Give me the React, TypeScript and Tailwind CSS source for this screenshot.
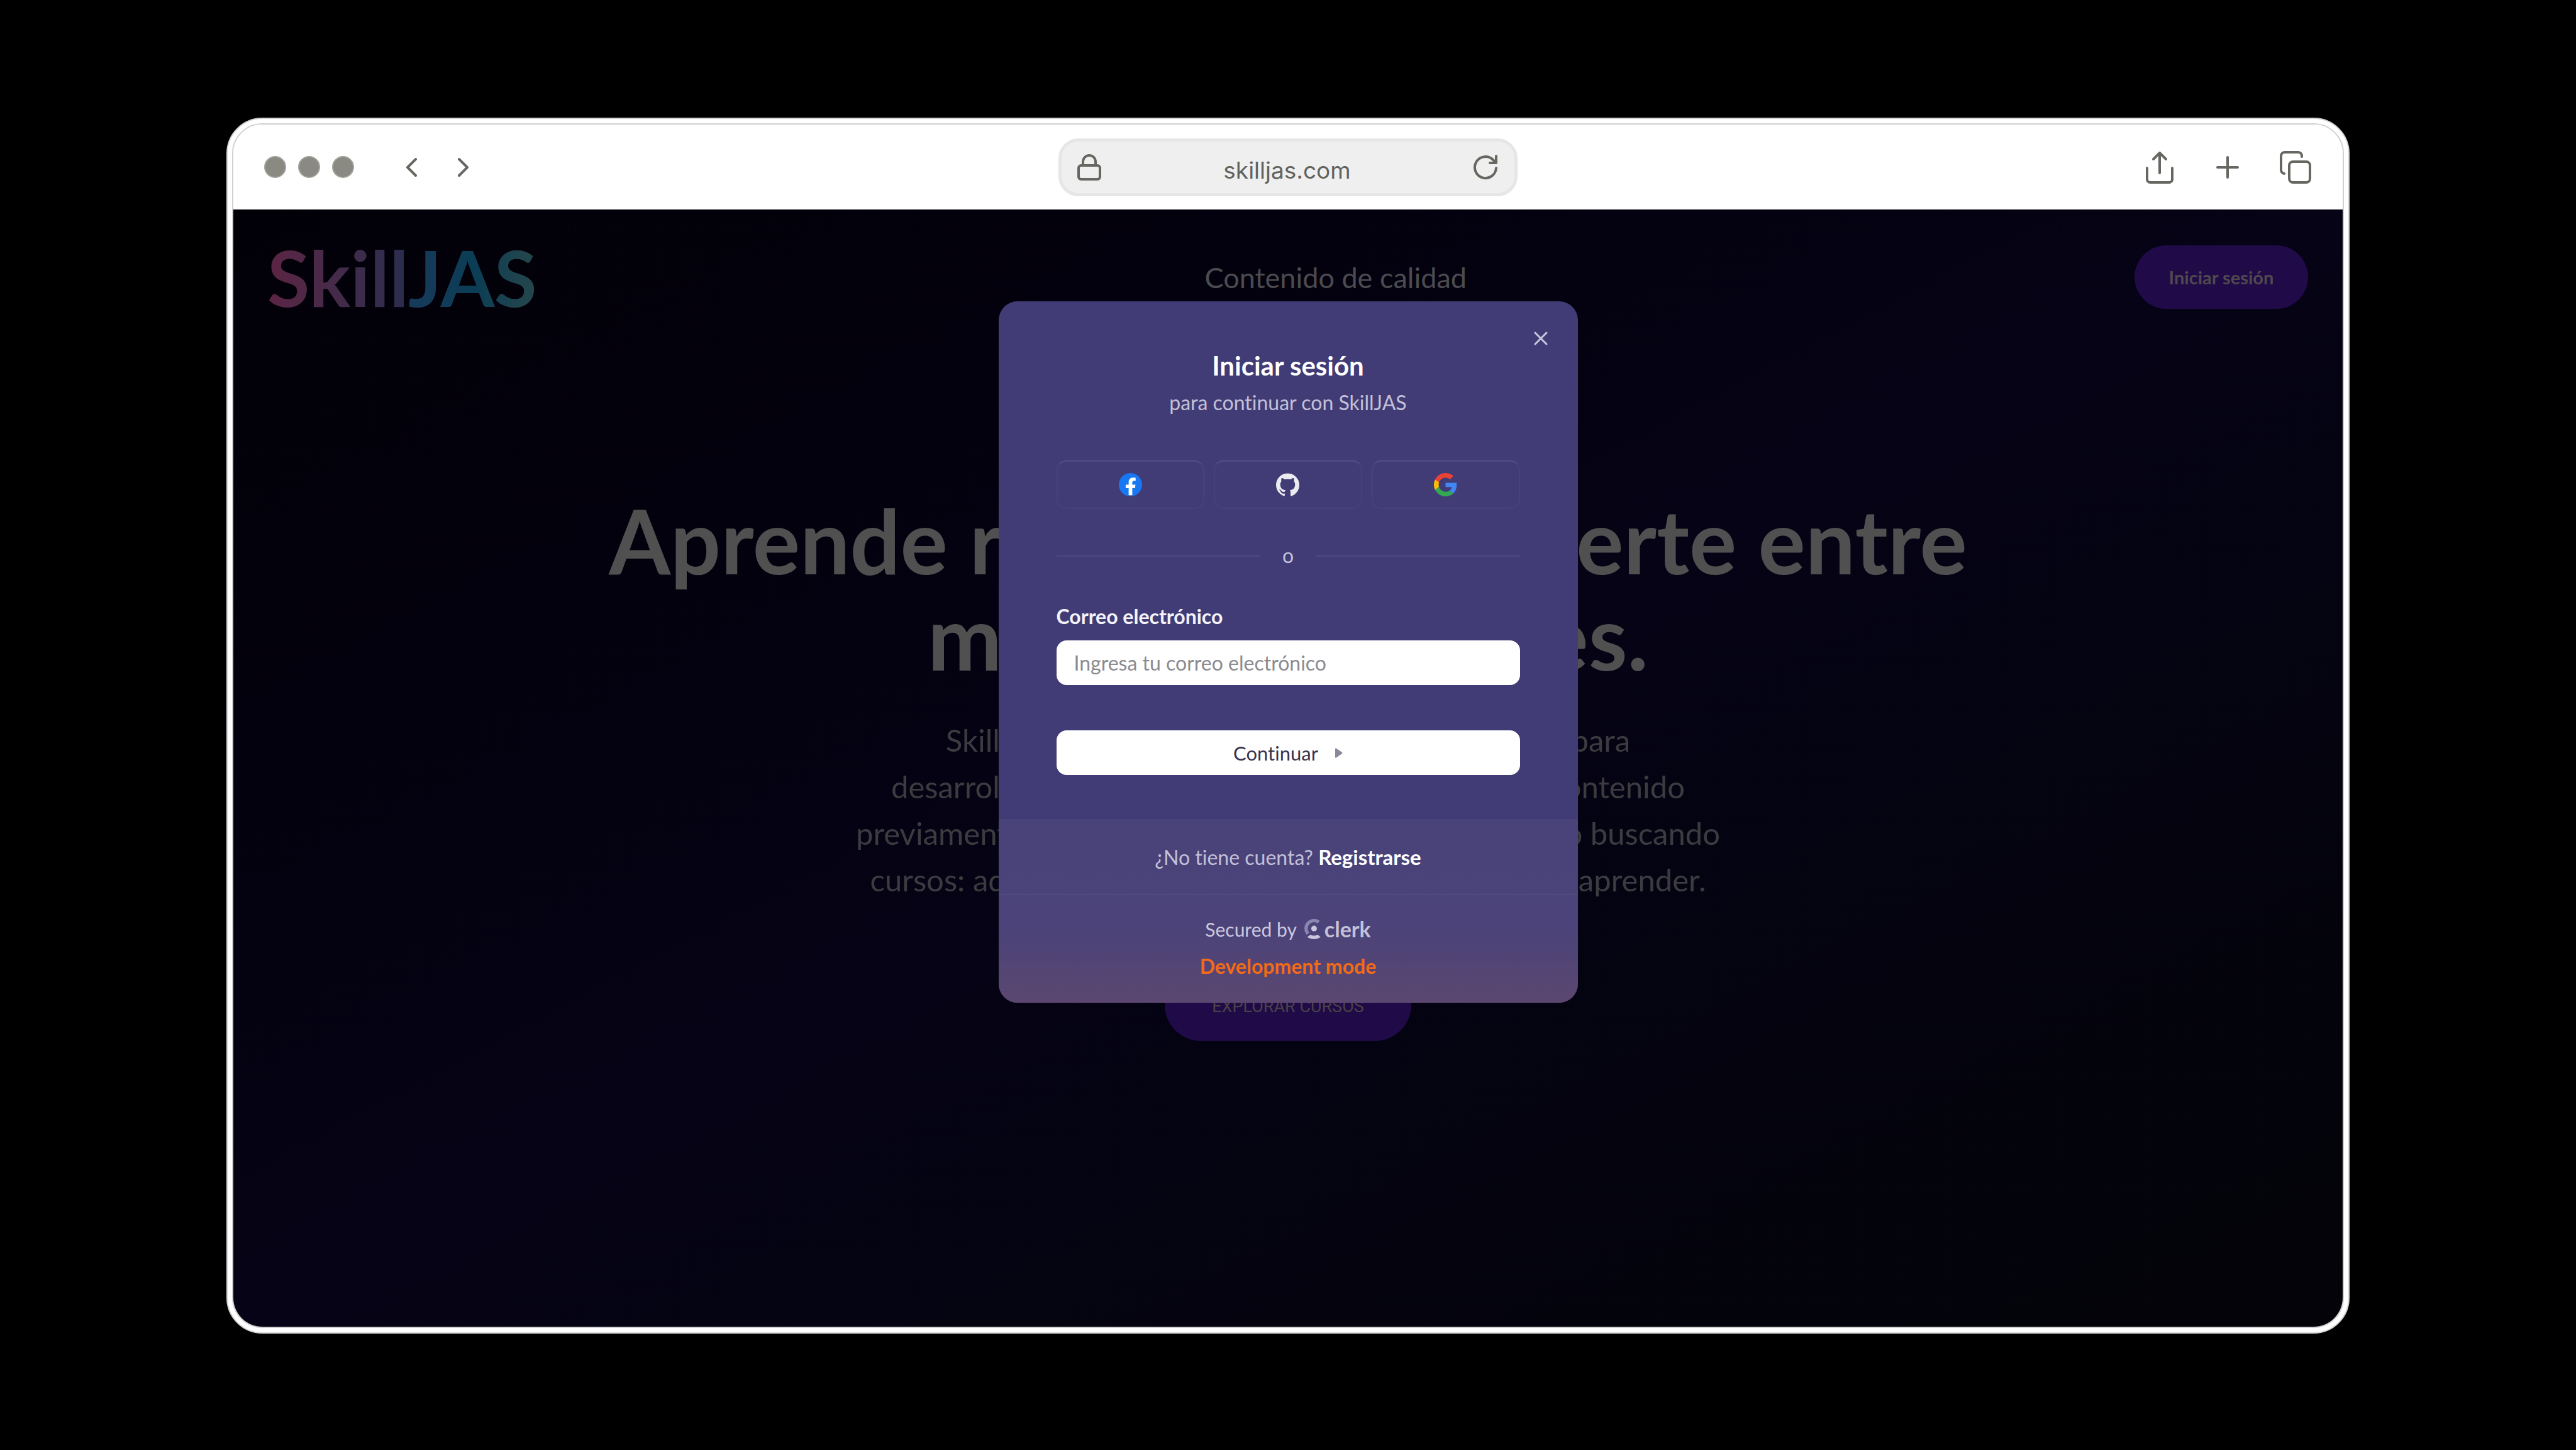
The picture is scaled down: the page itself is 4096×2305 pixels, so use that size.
import type { ReactNode } from "react";

function StrokeIcon({ box, className, width, children }: { box: string; className: string; width: number; children: ReactNode }) {
  return (
    <svg
      viewBox={box}
      className={className}
      fill="none"
      stroke="currentColor"
      strokeWidth={width}
      strokeLinecap="round"
      strokeLinejoin="round"
      aria-hidden="true"
    >
      {children}
    </svg>
  );
}

function Toolbar() {
  return (
    <div className="grid h-[135px] shrink-0 grid-cols-[1fr_auto_1fr] items-center bg-white pr-[50px] pl-[49px] text-[#666761]">
      <div className="flex items-center">
        <div className="flex gap-[19px]">
          <span className="size-[35px] rounded-full border-2 border-[#a3a39d] bg-[#8a8a82]" />
          <span className="size-[35px] rounded-full border-2 border-[#a3a39d] bg-[#8a8a82]" />
          <span className="size-[35px] rounded-full border-2 border-[#a3a39d] bg-[#8a8a82]" />
        </div>
        <div className="ml-[74px] flex gap-[45px]">
          <button aria-label="Atrás">
            <StrokeIcon box="0 0 36 36" className="size-9" width={4}>
              <path d="M24 5 11 18l13 13" />
            </StrokeIcon>
          </button>
          <button aria-label="Adelante">
            <StrokeIcon box="0 0 36 36" className="size-9" width={4}>
              <path d="m12 5 13 13-13 13" />
            </StrokeIcon>
          </button>
        </div>
      </div>

      <div className="flex h-[92px] w-[730px] items-center justify-between rounded-[32px] border-[5px] border-[#e6e6e5] bg-[#efefef] px-[25px]">
        <StrokeIcon box="0 0 38 42" className="h-[42px] w-[38px]" width={4}>
          <rect x="2" y="18" width="34" height="22" rx="4" />
          <path d="M9 18v-6a10 10 0 0 1 20 0v6" />
        </StrokeIcon>
        <span className="pt-[10px] font-[Inter,sans-serif] text-[37px] leading-[44px] text-[#62635d]">skilljas.com</span>
        <button aria-label="Recargar">
          <StrokeIcon box="0 0 40 40" className="size-10" width={4}>
            <path d="M37 21a17 17 0 1 1-5-13l4 4" />
            <path d="M37 2v11H27" />
          </StrokeIcon>
        </button>
      </div>

      <div className="flex items-center justify-end gap-[58px]">
        <button aria-label="Compartir">
          <StrokeIcon box="0 0 50 52" className="h-[52px] w-[50px]" width={4}>
            <path d="M5 27v18a5 5 0 0 0 5 5h30a5 5 0 0 0 5-5V27" />
            <path d="M25 35V4" />
            <path d="M15 13 25 3l10 10" />
          </StrokeIcon>
        </button>
        <button aria-label="Nueva pestaña">
          <StrokeIcon box="0 0 50 52" className="h-[52px] w-[50px]" width={4}>
            <path d="M25 10v32M9 26h32" />
          </StrokeIcon>
        </button>
        <button aria-label="Pestañas">
          <StrokeIcon box="0 0 50 52" className="h-[52px] w-[50px]" width={4}>
            <rect x="15" y="17" width="33" height="33" rx="6" />
            <path d="M35 9V8a6 6 0 0 0-6-6H8a6 6 0 0 0-6 6v22a6 6 0 0 0 5 6" />
          </StrokeIcon>
        </button>
      </div>
    </div>
  );
}

function Landing() {
  return (
    <>
      <header className="flex items-center justify-between pt-[57px] pr-[55px] pl-[54px]">
        <a
          href="#"
          className="bg-linear-to-r from-[#5c2444] via-[#2c2d4e] via-50% to-[#24464a] bg-clip-text text-[123px] leading-[101px] font-bold text-transparent"
        >
          Skill
          <span className="bg-linear-to-r from-[#173a5a] via-[#0a3d56] to-[#25474a] bg-clip-text">JAS</span>
        </a>
        <p className="text-[45px] leading-[52px] text-[#4b4b50]">Contenido de calidad</p>
        <button className="h-[101px] w-[276px] rounded-full bg-[#200a48] text-[29px] font-bold text-[#51484f]">
          Iniciar sesión
        </button>
      </header>
      <section className="flex flex-col items-center text-center">
        <h1 className="mt-[291px] text-[141px] leading-[153px] font-bold text-[#505050]">
          Aprende rápido, sin perderte entre
          <br />
          miles de opciones.
        </h1>
        <p className="mt-[51px] text-[49px] leading-[74px] text-[#3b3b40]">
          SkillJAS es una plataforma educativa diseñada para
          <br />
          desarrolladores donde puedes encontrar todo tu contenido
          <br />
          previamente seleccionado para que no pierdas tiempo buscando
          <br />
          cursos: aquí solamente tendrás que preocuparte por aprender.
        </p>
        <button className="mt-[104px] h-[116px] w-[392px] rounded-full bg-[#200a48] pt-[6px] font-[Roboto,sans-serif] text-[27px] text-[#4a4346]">
          EXPLORAR CURSOS
        </button>
      </section>
    </>
  );
}

const socialClass =
  "flex h-[78px] items-center justify-center rounded-[16px] border-2 border-t-[3px] border-[#47427b] border-t-[#4e4983]";

function SocialButtons() {
  return (
    <div className="mt-[71px] grid grid-cols-3 gap-[15px]">
      <button aria-label="Facebook" className={socialClass}>
        <svg viewBox="0 0 24 24" className="size-[37px]" aria-hidden="true">
          <circle cx="12" cy="12" r="11" fill="#fff" />
          <path
            fill="#1877f2"
            d="M24 12.073c0-6.627-5.373-12-12-12s-12 5.373-12 12c0 5.99 4.388 10.954 10.125 11.854v-8.385H7.078v-3.47h3.047V9.43c0-3.007 1.792-4.669 4.533-4.669 1.312 0 2.686.235 2.686.235v2.953H15.83c-1.491 0-1.956.925-1.956 1.874v2.25h3.328l-.532 3.47h-2.796v8.385C19.612 23.027 24 18.062 24 12.073z"
          />
        </svg>
      </button>
      <button aria-label="GitHub" className={socialClass}>
        <svg viewBox="0 0 24 24" className="size-[37px]" aria-hidden="true">
          <path
            fill="#ececf0"
            d="M12 .297c-6.63 0-12 5.373-12 12 0 5.303 3.438 9.8 8.205 11.385.6.113.82-.258.82-.577 0-.285-.01-1.04-.015-2.04-3.338.724-4.042-1.61-4.042-1.61C4.422 18.07 3.633 17.7 3.633 17.7c-1.087-.744.084-.729.084-.729 1.205.084 1.838 1.236 1.838 1.236 1.07 1.835 2.809 1.305 3.495.998.108-.776.417-1.305.76-1.605-2.665-.3-5.466-1.332-5.466-5.93 0-1.31.465-2.38 1.235-3.22-.135-.303-.54-1.523.105-3.176 0 0 1.005-.322 3.3 1.23.96-.267 1.98-.399 3-.405 1.02.006 2.04.138 3 .405 2.28-1.552 3.285-1.23 3.285-1.23.645 1.653.24 2.873.12 3.176.765.84 1.23 1.91 1.23 3.22 0 4.61-2.805 5.625-5.475 5.92.42.36.81 1.096.81 2.22 0 1.606-.015 2.896-.015 3.286 0 .315.21.69.825.57C20.565 22.092 24 17.592 24 12.297c0-6.627-5.373-12-12-12"
          />
        </svg>
      </button>
      <button aria-label="Google" className={socialClass}>
        <svg viewBox="0 0 48 48" className="size-[37px]" aria-hidden="true">
          <path fill="#EA4335" d="M24 9.5c3.54 0 6.71 1.22 9.21 3.6l6.85-6.85C35.9 2.38 30.47 0 24 0 14.62 0 6.51 5.38 2.56 13.22l7.98 6.19C12.43 13.72 17.74 9.5 24 9.5z" />
          <path fill="#4285F4" d="M46.98 24.55c0-1.57-.15-3.09-.38-4.55H24v9.02h12.94c-.58 2.96-2.26 5.48-4.78 7.18l7.73 6c4.51-4.18 7.09-10.36 7.09-17.65z" />
          <path fill="#FBBC05" d="M10.53 28.59c-.48-1.45-.76-2.99-.76-4.59s.27-3.14.76-4.59l-7.98-6.19C.92 16.46 0 20.12 0 24c0 3.88.92 7.54 2.56 10.78l7.97-6.19z" />
          <path fill="#34A853" d="M24 48c6.48 0 11.93-2.13 15.89-5.81l-7.73-6c-2.15 1.45-4.92 2.3-8.16 2.3-6.26 0-11.57-4.22-13.47-9.91l-7.98 6.19C6.51 42.62 14.62 48 24 48z" />
        </svg>
      </button>
    </div>
  );
}

function SignInDialog() {
  return (
    <div
      role="dialog"
      aria-labelledby="dialog-title"
      className="relative w-[921px] overflow-hidden rounded-[30px] bg-[#413c75] text-[#c3c0d8]"
    >
      <button aria-label="Cerrar" className="absolute top-[37px] right-[37px] flex size-[44px] items-center justify-center text-[#c9c7dc]">
        <StrokeIcon box="0 0 22 22" className="size-[22px]" width={3}>
          <path d="m2 2 18 18M20 2 2 20" />
        </StrokeIcon>
      </button>

      <div className="px-[92px] pt-[77px] pb-[70px]">
        <h2 id="dialog-title" className="text-center text-[42px] leading-[50px] font-bold text-white">
          Iniciar sesión
        </h2>
        <p className="mt-[14px] text-center text-[32px] leading-[40px]">para continuar con SkillJAS</p>

        <SocialButtons />

        <div className="mt-[54px] flex items-center gap-[35px]">
          <span className="h-[3px] flex-1 bg-[#4a457e]" />
          <span className="text-[32px] leading-[40px]">o</span>
          <span className="h-[3px] flex-1 bg-[#4a457e]" />
        </div>

        <form className="mt-[57px] flex flex-col" onSubmit={(e) => e.preventDefault()}>
          <label htmlFor="email" className="text-[32px] leading-[40px] font-bold text-[#f3f2f9]">
            Correo electrónico
          </label>
          <input
            id="email"
            type="email"
            placeholder="Ingresa tu correo electrónico"
            className="mt-[18px] h-[71px] rounded-[16px] bg-white px-[28px] text-[32px] text-[#333] placeholder:text-[#8b8b8f]"
          />
          <button
            type="submit"
            className="mt-[72px] flex h-[71px] items-center justify-center gap-[27px] rounded-[16px] bg-white text-[31px] leading-[40px] text-[#37334f]"
          >
            Continuar
            <svg viewBox="0 0 12 16" className="h-4 w-3 text-[#8b889b]" fill="currentColor" aria-hidden="true">
              <path d="M0 1.500Q0 0 1.500.5L11 7q1 1 0 2l-9.500 6.500Q0 16 0 14.500z" />
            </svg>
          </button>
        </form>
      </div>

      <div className="bg-linear-to-b from-[#49437a] via-[#4b4379] via-60% to-[#5b4770]">
        <p className="border-b-2 border-[#514b83] pt-[40px] pb-[38px] text-center text-[32px] leading-[40px]">
          ¿No tiene cuenta?{" "}
          <a href="#" className="text-[33px] font-bold text-white">
            Registrarse
          </a>
        </p>
        <div className="flex flex-col items-center gap-[19px] pt-[34px] pb-[38px]">
          <p className="flex items-center text-[30px] leading-[40px] text-[#cbc8de]">
            Secured by
            <a href="#" className="ml-[12px] flex items-center gap-[6px] text-[34px] font-bold text-[#c4c1d8]">
              <svg viewBox="0 0 86 106" className="h-8 w-[26px]" aria-hidden="true">
                <path d="M76 16A42 42 0 0 0 19 77" fill="none" stroke="#8b86b0" strokeWidth="17" />
                <circle cx="51" cy="50" r="15" fill="#cbc8de" />
                <path d="M15 95 32 82q19 11 38 0l16 13q-35 22-71 0z" fill="#cbc8de" />
              </svg>
              clerk
            </a>
          </p>
          <p className="text-[32px] leading-[40px] font-bold text-[#f36b16]">Development mode</p>
        </div>
      </div>
    </div>
  );
}

export default function App() {
  return (
    <main className="flex min-h-screen flex-col bg-black px-[360px] pt-[187px] pb-[185px] font-[Lato,sans-serif] [font-variant-ligatures:none]">
      <div className="flex flex-1 flex-col rounded-[57px] border-2 border-[#d0d0d0] bg-white p-[7px]">
        <div className="flex flex-1 flex-col overflow-hidden rounded-[48px] border-2 border-[#d0d0d0]">
          <Toolbar />
          <div className="relative flex-1 bg-linear-to-br from-[#020007] via-[#050315] to-[#030308]">
            <Landing />
            <div className="absolute inset-0 flex items-start justify-center pt-[146px]">
              <SignInDialog />
            </div>
          </div>
        </div>
      </div>
    </main>
  );
}
